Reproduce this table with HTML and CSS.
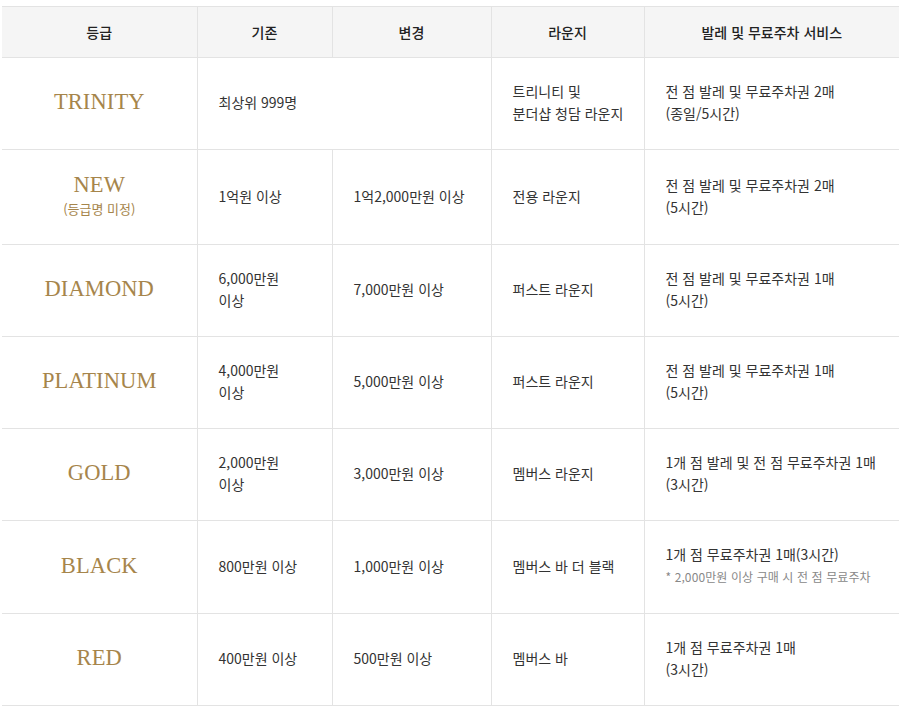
FILE: index.html
```html
<!DOCTYPE html>
<html lang="ko">
<head>
<meta charset="utf-8">
<title>등급</title>
<link rel="stylesheet" href="styles.css">
</head>
<body>
<div class="wrap">
<table class="grade-table">
  <colgroup>
    <col class="c1"><col class="c2"><col class="c3"><col class="c4"><col class="c5">
  </colgroup>
  <thead>
    <tr>
      <th>등급</th><th>기존</th><th>변경</th><th>라운지</th><th>발레 및 무료주차 서비스</th>
    </tr>
  </thead>
  <tbody>
    <tr>
      <td class="grade"><span class="name">TRINITY</span></td>
      <td colspan="2">최상위 999명</td>
      <td>트리니티 및<br>분더샵 청담 라운지</td>
      <td>전 점 발레 및 무료주차권 2매<br>(종일/5시간)</td>
    </tr>
    <tr>
      <td class="grade"><span class="name">NEW</span><span class="sub">(등급명 미정)</span></td>
      <td>1억원 이상</td>
      <td>1억2,000만원 이상</td>
      <td>전용 라운지</td>
      <td>전 점 발레 및 무료주차권 2매<br>(5시간)</td>
    </tr>
    <tr>
      <td class="grade"><span class="name">DIAMOND</span></td>
      <td>6,000만원<br>이상</td>
      <td>7,000만원 이상</td>
      <td>퍼스트 라운지</td>
      <td>전 점 발레 및 무료주차권 1매<br>(5시간)</td>
    </tr>
    <tr>
      <td class="grade"><span class="name">PLATINUM</span></td>
      <td>4,000만원<br>이상</td>
      <td>5,000만원 이상</td>
      <td>퍼스트 라운지</td>
      <td>전 점 발레 및 무료주차권 1매<br>(5시간)</td>
    </tr>
    <tr>
      <td class="grade"><span class="name">GOLD</span></td>
      <td>2,000만원<br>이상</td>
      <td>3,000만원 이상</td>
      <td>멤버스 라운지</td>
      <td>1개 점 발레 및 전 점 무료주차권 1매<br>(3시간)</td>
    </tr>
    <tr>
      <td class="grade"><span class="name">BLACK</span></td>
      <td>800만원 이상</td>
      <td>1,000만원 이상</td>
      <td>멤버스 바 더 블랙</td>
      <td>1개 점 무료주차권 1매(3시간)<br><span class="note">* 2,000만원 이상 구매 시 전 점 무료주차</span></td>
    </tr>
    <tr>
      <td class="grade"><span class="name">RED</span></td>
      <td>400만원 이상</td>
      <td>500만원 이상</td>
      <td>멤버스 바</td>
      <td>1개 점 무료주차권 1매<br>(3시간)</td>
    </tr>
  </tbody>
</table>
</div>
</body>
</html>
```

FILE: styles.css
```css
html, body {
  margin: 0;
  padding: 0;
  background: #fff;
}
.wrap {
  padding: 6px 4px 0 2px;
}
.grade-table {
  width: 897px;
  border-collapse: collapse;
  table-layout: fixed;
  font-family: "Noto Sans CJK KR", "Noto Sans", sans-serif;
  font-size: 14px;
  color: #333;
  letter-spacing: 0;
  word-break: keep-all;
}
.c1 { width: 195px; }
.c2 { width: 135px; }
.c3 { width: 159px; }
.c4 { width: 153px; }
.c5 { width: 255px; }
.grade-table th {
  background: #f5f5f5;
  border-top: 1px solid #e3e3e3;
  border-bottom: 1px solid #e3e3e3;
  border-left: 1px solid #e3e3e3;
  height: 50px;
  padding: 0;
  line-height: 20px;
  font-weight: 500;
  color: #222;
  text-align: center;
  vertical-align: middle;
}
.grade-table th:first-child,
.grade-table td:first-child {
  border-left: none;
}
.grade-table td {
  border-bottom: 1px solid #e3e3e3;
  border-left: 1px solid #e3e3e3;
  padding: 22px 20px 25px 21px;
  line-height: 22px;
  vertical-align: middle;
  text-align: left;
  white-space: nowrap;
}
.grade-table td.grade {
  text-align: center;
  padding-left: 0;
  padding-right: 0;
}
.name {
  display: block;
  font-family: "Liberation Serif", "Times New Roman", serif;
  font-size: 22.5px;
  line-height: 26px;
  color: #a6854b;
  letter-spacing: 0.1px;
}
.sub {
  display: block;
  font-size: 13px;
  line-height: 21px;
  color: #a6854b;
}
.note {
  font-size: 12px;
  color: #888;
  letter-spacing: 0.1px;
}
```
